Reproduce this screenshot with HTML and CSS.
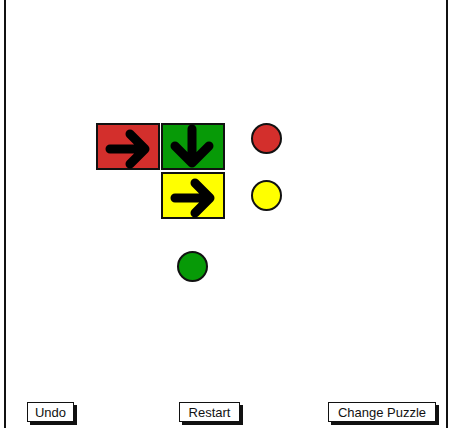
FILE: index.html
```html
<!DOCTYPE html>
<html>
<head>
<meta charset="utf-8">
<link rel="stylesheet" href="styles.css">
</head>
<body>
<div class="frame">
  <div class="board">
    <div class="tile red" style="left:96px;top:123px">
      <svg viewBox="0 0 64 47" width="64" height="47"><path d="M14 26 H49 M34 11 L49 26 L34 41" class="arrow"/></svg>
    </div>
    <div class="tile green" style="left:161px;top:123px">
      <svg viewBox="0 0 64 47" width="64" height="47"><path d="M31 6 V40 M14 23 L31 40 L48 23" class="arrow"/></svg>
    </div>
    <div class="tile yellow" style="left:161px;top:172px">
      <svg viewBox="0 0 64 47" width="64" height="47"><path d="M14 26 H49 M34 11 L49 26 L34 41" class="arrow"/></svg>
    </div>
    <div class="dot red" style="left:251px;top:123px"></div>
    <div class="dot yellow" style="left:251px;top:180px"></div>
    <div class="dot green" style="left:177px;top:251px"></div>
  </div>
  <div class="controls">
    <button class="btn btn-undo">Undo</button>
    <button class="btn btn-restart">Restart</button>
    <button class="btn btn-change">Change Puzzle</button>
  </div>
</div>
</body>
</html>
```
FILE: styles.css
```css
html, body {
  margin: 0;
  padding: 0;
  background: #fff;
}
body {
  width: 452px;
  height: 428px;
  overflow: hidden;
  font-family: "Liberation Sans", Arial, sans-serif;
}
.frame {
  box-sizing: border-box;
  margin-left: 4px;
  width: 444px;
  height: 428px;
  border-left: 2px solid #111;
  border-right: 2px solid #111;
  display: flex;
  flex-direction: column;
}
.board {
  position: relative;
  flex: 1;
}
.tile {
  position: absolute;
  box-sizing: border-box;
  width: 64px;
  height: 47px;
  border: 2px solid #111;
  margin-left: -6px;
}
.tile svg {
  position: absolute;
  left: -2px;
  top: -2px;
}
.arrow {
  fill: none;
  stroke: #000;
  stroke-width: 9;
  stroke-linecap: round;
  stroke-linejoin: round;
}
.red { background: #d32f2c; }
.green { background: #079a07; }
.yellow { background: #ffff00; }
.dot {
  position: absolute;
  box-sizing: border-box;
  width: 31px;
  height: 31px;
  border-radius: 50%;
  border: 2px solid #111;
  margin-left: -6px;
}
.controls {
  display: flex;
  align-items: flex-start;
  padding: 0 0 4px 21px;
  height: 22px;
}
.btn {
  box-sizing: border-box;
  height: 20px;
  padding: 0;
  background: #fff;
  border: 1.5px solid #111;
  box-shadow: 3px 3px 0 #111;
  font-family: "Liberation Sans", Arial, sans-serif;
  font-size: 13px;
  color: #111;
  line-height: 17px;
  text-align: center;
}
.btn-undo { width: 47px; }
.btn-restart { width: 61px; margin-left: 105px; }
.btn-change { width: 108px; margin-left: 88px; }
```
